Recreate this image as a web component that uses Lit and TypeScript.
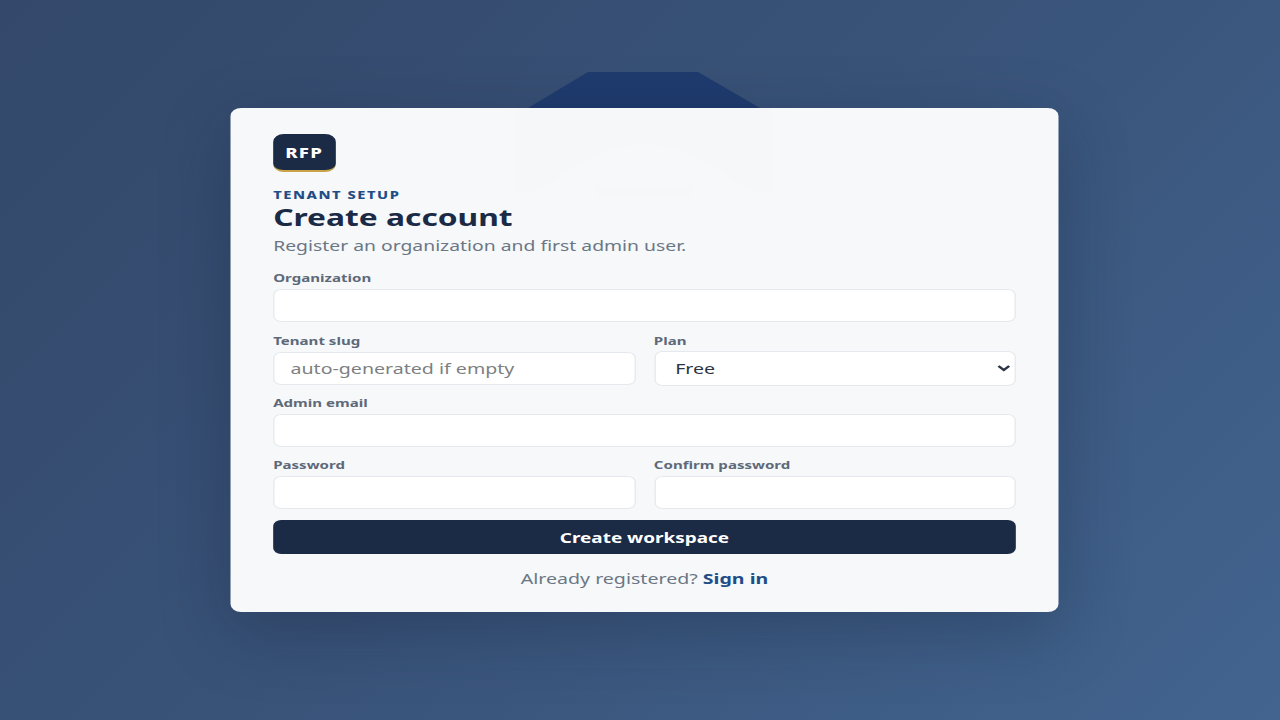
import { LitElement, html, css } from "lit";
import { customElement } from "lit/decorators.js";

@customElement("app-root")
export class AppRoot extends LitElement {
  static styles = css`
    :host { display: block; width: 1280px; height: 720px; overflow: hidden; font-family: "Noto Sans", "Open Sans", sans-serif; }
    * { box-sizing: border-box; }
    .page { position: relative; width: 1280px; height: 720px; display: flex; align-items: center; justify-content: center; padding-left: 8px;
      background: linear-gradient(135deg, #33486a 0%, #395379 50%, #42648f 100%); overflow: hidden; }
    .back { position: absolute; left: 528px; top: 72px; width: 232px; height: 36px; }
    .card { position: relative; flex: none; width: 621px; height: 504px; padding: 26px 32px 0; background: #f6f8fa; border-radius: 8px;
      box-shadow: 0 20px 60px rgba(15, 25, 45, .28); transform: scaleX(1.3333); }
    .faint { position: absolute; left: 214px; top: 0; width: 192px; height: 88px; }
    .content { position: relative; display: flex; flex-direction: column; }
    .logo { width: 46.5px; height: 38px; border-radius: 8px; background: #1b2a45; border-bottom: 2.5px solid #c9a24a; color: #fff;
      display: flex; align-items: center; justify-content: center; font-weight: 800; font-size: 14px; letter-spacing: .9px; }
    .eyebrow { margin-top: 16px; font-size: 11px; line-height: 14px; font-weight: 800; letter-spacing: 1.15px; color: #1f4e87; }
    h1 { margin: -.5px 0 0; font-size: 23.8px; line-height: 31px; font-weight: 700; color: #1b2a45; }
    .sub { margin: 2px 0 0; font-size: 14.5px; line-height: 20px; color: #6b7785; }
    .grid { margin-top: 16.7px; display: grid; grid-template-columns: 1fr 1fr; column-gap: 14px; row-gap: 11.4px; }
    .full { grid-column: 1 / -1; }
    label { display: block; font-size: 11.3px; line-height: 14px; font-weight: 700; color: #5d6979; margin-bottom: 4px; }
    input, select { display: block; width: 100%; height: 33px; border: 1px solid #e5e9ee; border-radius: 6px; background: #fff; padding: 0 12px;
      font: 14.7px "Noto Sans", "Open Sans", sans-serif; color: #2a3442; outline: none; }
    input::placeholder { color: #7d7f82; opacity: 1; }
    select { height: 35px; margin-top: -1px; margin-bottom: -1px; padding-left: 11px; }
    button { margin-top: 11px; width: 100%; height: 34px; border: 0; border-radius: 6px; background: #1b2a45; color: #fff;
      font: 700 14.2px "Noto Sans", "Open Sans", sans-serif; }
    .foot { margin-top: 13.5px; text-align: center; font-size: 14.7px; line-height: 20px; color: #6b7785; }
    .foot a { color: #1f4e87; font-weight: 700; text-decoration: none; }
  `;

  render() {
    return html`<div class="page">
      <svg class="back" viewBox="0 0 232 36" preserveAspectRatio="none"><polygon points="0,36 60,0 170,0 232,36" fill="#1f3b6e"/></svg>
      <div class="card">
        <svg class="faint" viewBox="0 0 192 88" preserveAspectRatio="none">
          <rect width="192" height="84" fill="#f5f7f9"/>
          <path d="M16 84 C45 55 70 37 96 36 C122 37 147 55 176 84 Z" fill="#f7f8fa"/>
          <rect x="60" y="78" width="72" height="10" fill="#f5f7f9"/>
        </svg>
        <div class="content">
          <div class="logo">RFP</div>
          <div class="eyebrow">TENANT SETUP</div>
          <h1>Create account</h1>
          <p class="sub">Register an organization and first admin user.</p>
          <div class="grid">
            <div class="full"><label>Organization</label><input /></div>
            <div><label>Tenant slug</label><input placeholder="auto-generated if empty" /></div>
            <div><label>Plan</label><select><option>Free</option><option>Pro</option></select></div>
            <div class="full"><label>Admin email</label><input type="email" /></div>
            <div><label>Password</label><input type="password" /></div>
            <div><label>Confirm password</label><input type="password" /></div>
          </div>
          <button>Create workspace</button>
          <div class="foot">Already registered? <a href="#">Sign in</a></div>
        </div>
      </div>
    </div>`;
  }
}
